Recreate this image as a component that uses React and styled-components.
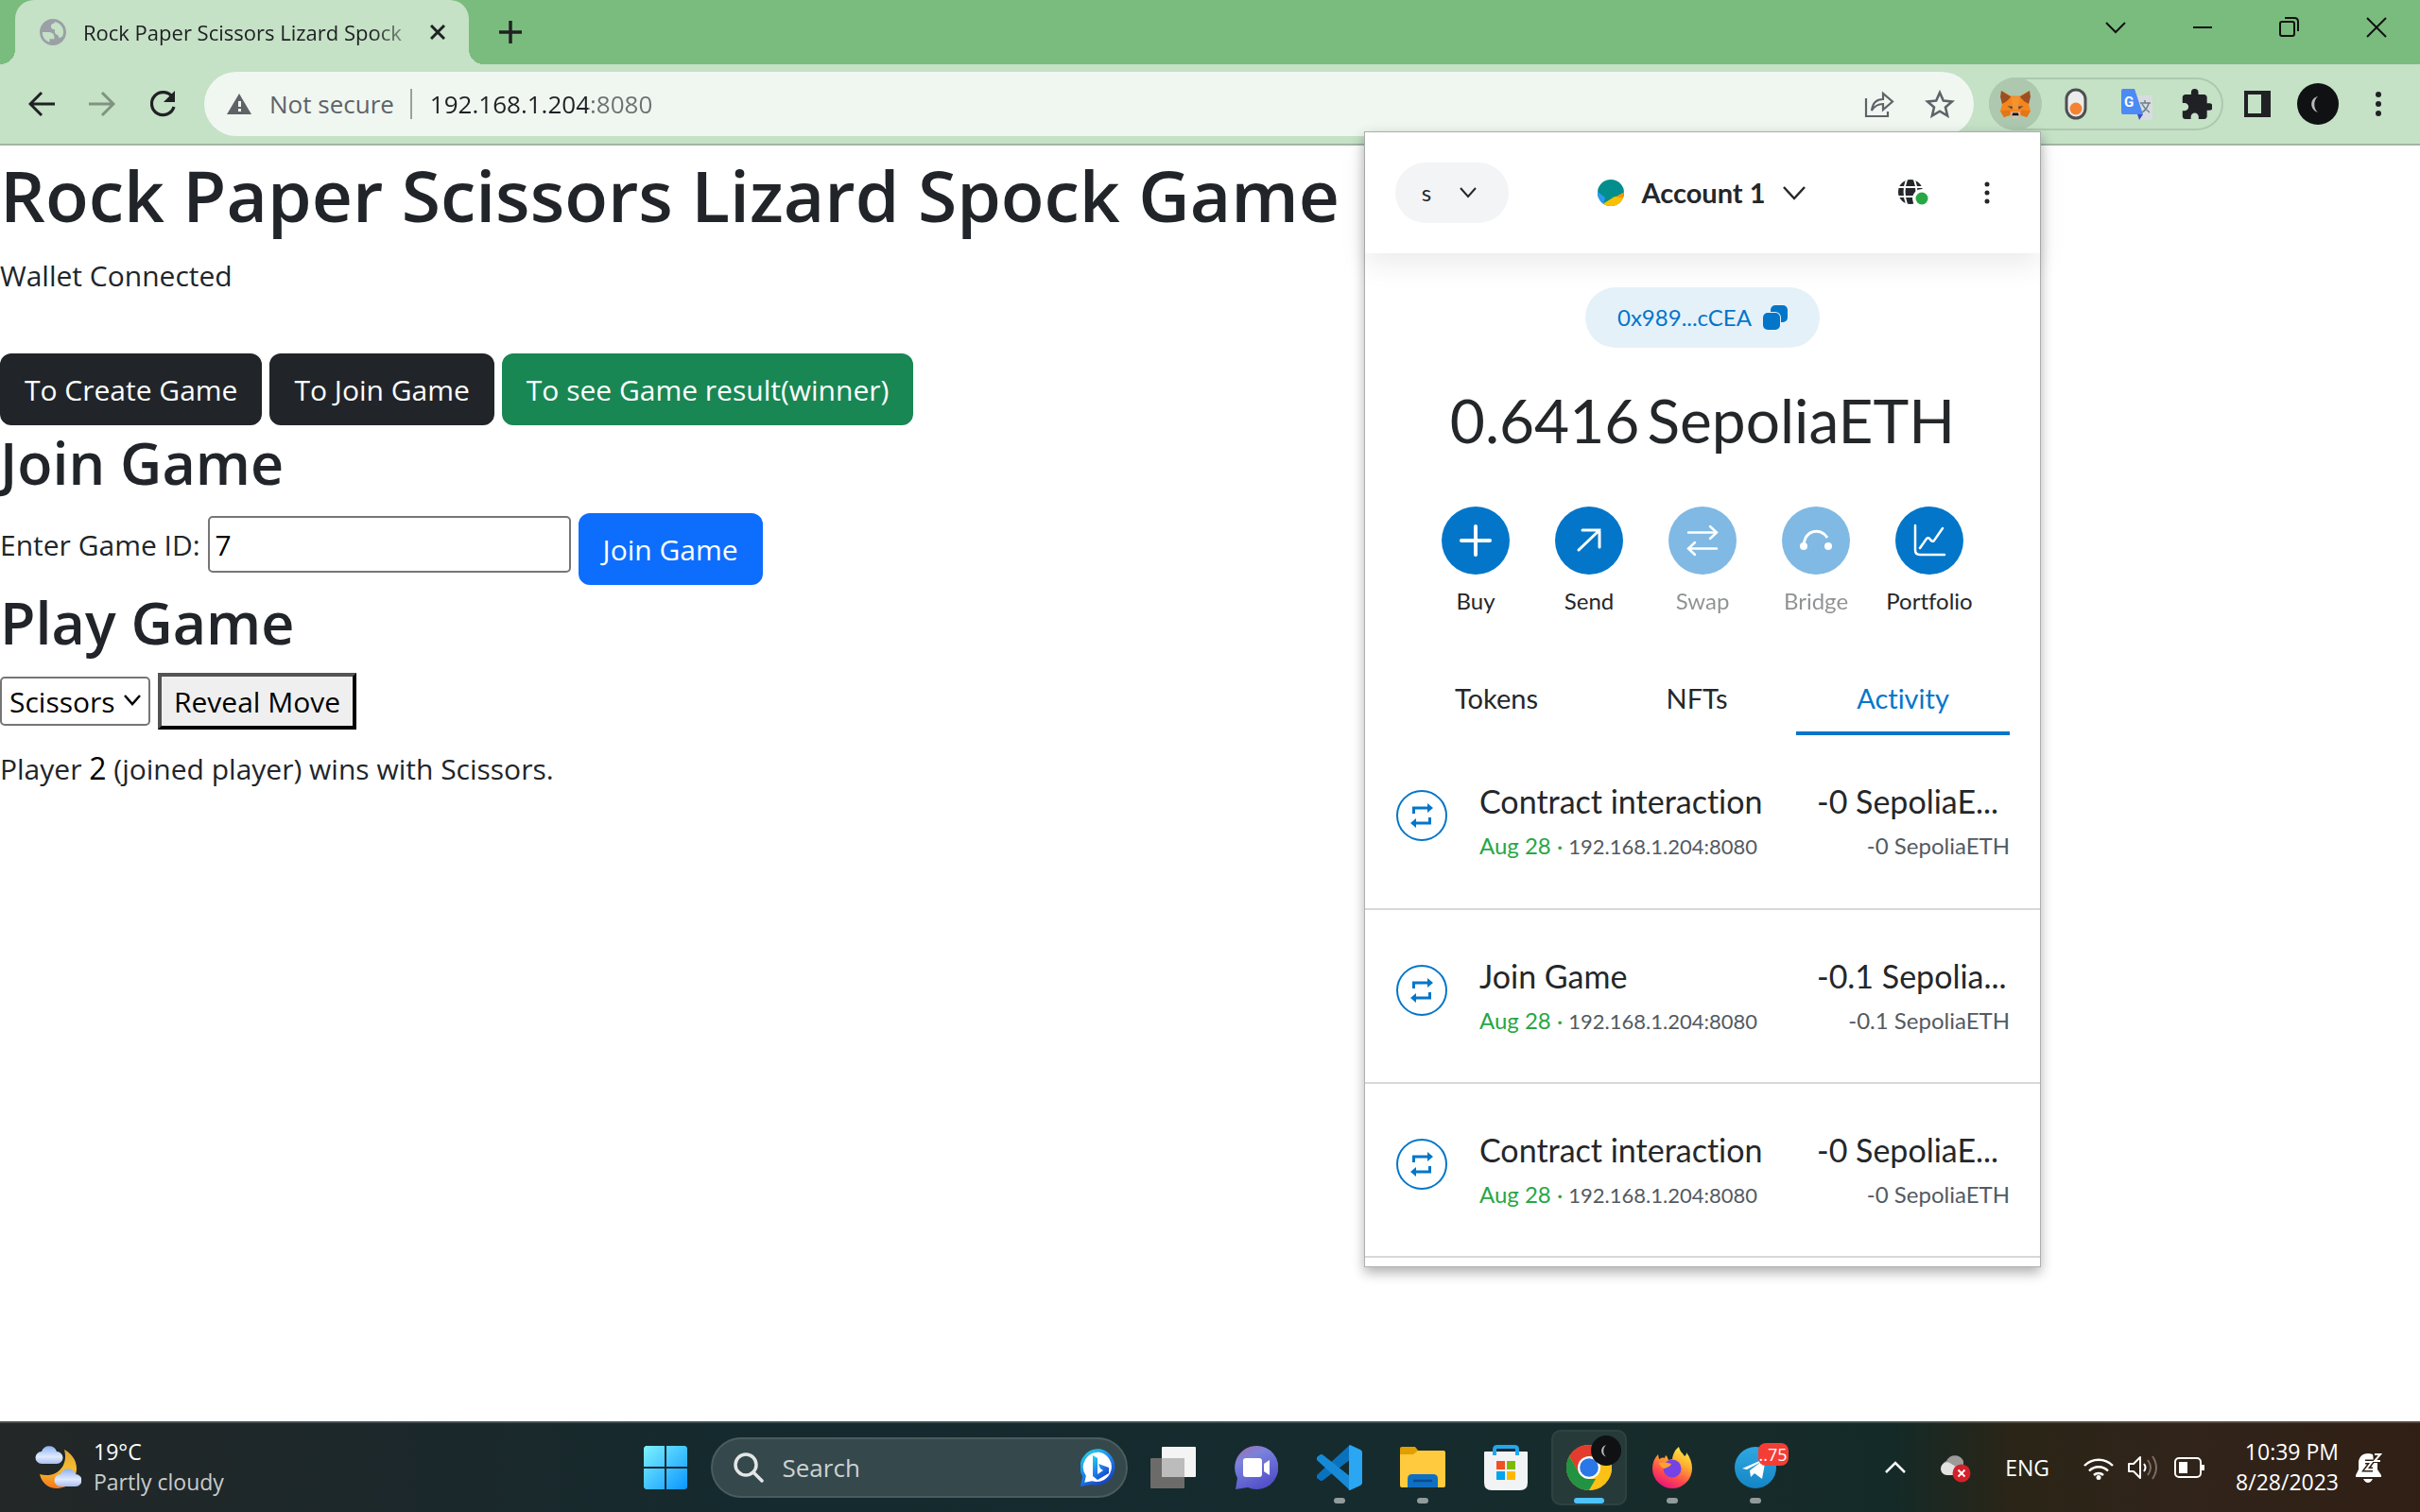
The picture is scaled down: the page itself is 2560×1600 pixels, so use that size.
import React from 'react';
import styled, { createGlobalStyle, css } from 'styled-components';

const ui = '"Open Sans", "Noto Sans", sans-serif';
const wallet = 'Lato, "Open Sans", sans-serif';

const GlobalStyle = createGlobalStyle`
  * { box-sizing: border-box; }
  html, body { margin: 0; padding: 0; }
  body { background: #fff; color: #212529; font-family: ${ui}; font-size: 30px; line-height: 48px; }
  h1, h2, p, ul { margin: 0; padding: 0; }
  button, input, select { font: inherit; color: inherit; margin: 0; }
  svg { display: block; flex: none; }
`;

const Screen = styled.div`
  position: relative;
  display: flex;
  flex-direction: column;
  min-height: 100vh;
`;

const PlainButton = styled.button`
  display: flex;
  align-items: center;
  justify-content: center;
  border: 0;
  padding: 0;
  background: none;
`;

/* ---------- browser frame ---------- */

const TabStrip = styled.header`
  display: flex;
  height: 68px;
  padding-left: 16px;
  background: #7abc7d;
`;

const Tab = styled.div`
  position: relative;
  display: flex;
  align-items: center;
  width: 480px;
  padding: 0 18px 0 26px;
  border-radius: 20px 20px 0 0;
  background: #c5e1c6;
  color: #202124;
  &::before, &::after {
    content: '';
    position: absolute;
    bottom: 0;
    width: 16px;
    height: 16px;
  }
  &::before { left: -16px; background: radial-gradient(circle at 0 0, transparent 16px, #c5e1c6 16px); }
  &::after { right: -16px; background: radial-gradient(circle at 100% 0, transparent 16px, #c5e1c6 16px); }
`;

const TabTitle = styled.span`
  flex: 1;
  margin-left: 18px;
  white-space: nowrap;
  font-size: 22px;
  line-height: 32px;
  mask-image: linear-gradient(to right, #000 85%, rgba(0, 0, 0, 0.3) 96%);
`;

const TabClose = styled(PlainButton)`
  width: 30px;
  height: 32px;
`;

const NewTab = styled(PlainButton)`
  width: 56px;
  margin-left: 16px;
`;

const WindowControls = styled.div`
  display: flex;
  height: 58px;
  margin-left: auto;
`;

const WindowButton = styled(PlainButton)`
  width: 92px;
`;

const Toolbar = styled.nav`
  display: flex;
  align-items: center;
  gap: 8px;
  height: 86px;
  padding: 0 16px;
  border-bottom: 2px solid #a2b5a3;
  background: #c5e1c6;
`;

const ToolButton = styled(PlainButton)`
  width: 56px;
  height: 56px;
  border-radius: 28px;
  background: ${p => (p.$active ? '#adc8ae' : 'none')};
`;

const Omnibox = styled.div`
  display: flex;
  align-items: center;
  flex: 1;
  height: 68px;
  margin: 0 8px;
  padding: 0 8px 0 24px;
  border-radius: 34px;
  background: #f0f7f1;
  font-size: 26px;
  line-height: 40px;
`;

const OmniActions = styled.div`
  display: flex;
  gap: 8px;
`;

const Security = styled.span`
  margin: 0 19px 0 19px;
  padding-right: 17px;
  border-right: 2px solid #9aa09b;
  color: #5f6368;
  line-height: 32px;
`;

const UrlInput = styled.input`
  flex: 1;
  border: 0;
  padding: 0;
  outline: 0;
  color: #202124;
  background: linear-gradient(to right, #202124 167px, #6d7271 167px);
  background-clip: text;
  -webkit-background-clip: text;
  -webkit-text-fill-color: transparent;
`;

const Extensions = styled.div`
  display: flex;
  gap: 8px;
  border-radius: 28px;
  box-shadow: inset 0 0 0 2px #adc8ae;
`;

/* ---------- game page ---------- */

const Page = styled.main`
  flex: 1;
  padding-top: 6px;
`;

const Title = styled.h1`
  margin-bottom: 16px;
  font-size: 75px;
  font-weight: 600;
  line-height: 92px;
`;

const Heading = styled.h2`
  margin-bottom: 13px;
  font-size: 61px;
  font-weight: 600;
  line-height: 80px;
`;

const Status = styled.p`
  margin-bottom: 58px;
`;

const Row = styled.div`
  display: flex;
  align-items: ${p => p.$align || 'center'};
  gap: 8px;
`;

const Field = styled.div`
  display: flex;
  align-items: center;
  gap: 8px;
  padding-top: 3px;
`;

const tones = { dark: '#212529', success: '#198754', primary: '#0d6efd' };

const Button = styled.button`
  padding: 13px 24px 11px;
  border: 2px solid ${p => tones[p.$tone]};
  border-radius: 12px;
  background: ${p => tones[p.$tone]};
  color: #fff;
`;

const FieldLabel = styled.label`
  padding-top: 2px;
`;

const GameInput = styled.input`
  width: 384px;
  height: 60px;
  padding: 2px 6px;
  border: 2px solid #767676;
  border-radius: 5px;
  background: #fff;
  color: #000;
`;

const SelectWrap = styled.div`
  position: relative;
  svg { position: absolute; right: 10px; top: 18px; pointer-events: none; }
`;

const MoveSelect = styled.select`
  appearance: none;
  height: 52px;
  padding: 2px 35px 0 8px;
  border: 2px solid #767676;
  border-radius: 5px;
  background: #fff;
  color: #000;
  line-height: 46px;
`;

const RevealButton = styled.button`
  height: 60px;
  padding: 3px 13px 1px;
  border: 4px outset #000;
  background: #efefef;
  color: #000;
`;

const Result = styled.p`
  margin-top: 17px;
  strong { font-size: 32px; font-weight: 500; color: #000; }
`;

/* ---------- wallet popup ---------- */

const Popup = styled.aside`
  position: absolute;
  top: 139px;
  right: 401px;
  width: 716px;
  border: 1px solid #adb0ad;
  background: #fff;
  box-shadow: 0 6px 12px rgba(0, 0, 0, 0.3);
  color: #24272a;
  font-family: ${wallet};
  font-variant-ligatures: none;
`;

const WalletHeader = styled.header`
  display: grid;
  grid-template-columns: 1fr auto 1fr;
  align-items: center;
  height: 128px;
  padding: 0 32px;
  box-shadow: 0 12px 28px rgba(0, 0, 0, 0.08);
`;

const NetworkButton = styled(PlainButton)`
  gap: 30px;
  justify-self: start;
  width: 120px;
  height: 64px;
  padding-right: 6px;
  border-radius: 32px;
  background: #f2f4f6;
  font-size: 24px;
`;

const AccountButton = styled(PlainButton)`
  gap: 18px;
  padding-right: 2px;
  font-size: 29px;
  font-weight: 700;
  line-height: 40px;
`;

const HeaderTools = styled.div`
  display: flex;
  align-items: center;
  justify-content: flex-end;
  gap: 38px;
`;

const HeaderButton = styled(PlainButton)`
  width: ${p => p.$w}px;
  height: 48px;
`;

const AddressButton = styled(PlainButton)`
  gap: 12px;
  height: 64px;
  margin: 36px auto 0;
  padding: 0 34px;
  border-radius: 32px;
  background: #e5f1f9;
  color: #0376c9;
  font-size: 24px;
`;

const Balance = styled.p`
  display: flex;
  justify-content: center;
  gap: 8px;
  margin-top: 37px;
  font-size: 64px;
  line-height: 80px;
`;

const Actions = styled.div`
  display: grid;
  grid-template-columns: repeat(5, 120px);
  justify-content: center;
  margin-top: 51px;
`;

const Action = styled(PlainButton)`
  flex-direction: column;
  gap: 12px;
  font-size: 24px;
  line-height: 32px;
  opacity: ${p => (p.disabled ? 0.5 : 1)};
`;

const ActionDisc = styled.span`
  display: flex;
  align-items: center;
  justify-content: center;
  width: 72px;
  height: 72px;
  border-radius: 50%;
  background: #0376c9;
`;

const Tabs = styled.div`
  display: grid;
  grid-template-columns: 107fr 105fr 113fr;
  margin-top: 52px;
  padding: 0 32px;
`;

const WalletTab = styled.button`
  padding: 15px 0;
  border: 0;
  border-bottom: 4px solid ${p => (p['aria-selected'] ? '#0376c9' : 'transparent')};
  background: none;
  color: ${p => (p['aria-selected'] ? '#0376c9' : '#24272a')};
  font-size: 29px;
  line-height: 40px;
`;

const ActivityList = styled.ul`
  padding-bottom: 9px;
  list-style: none;
`;

const ActivityItem = styled.li`
  display: flex;
  gap: 34px;
  padding: 48px 32px 49px 33px;
  border-bottom: 2px solid #d6d9dc;
  & + & { padding-bottom: 48px; }
`;

const ActivityIcon = styled.span`
  display: flex;
  align-items: center;
  justify-content: center;
  width: 54px;
  height: 54px;
  margin-top: 10px;
  border: 2px solid #0376c9;
  border-radius: 50%;
`;

const ActivityText = styled.div`
  flex: 1;
  display: flex;
  flex-direction: column;
  gap: 9px;
`;

const Amounts = styled(ActivityText)`
  flex: 0 0 204px;
`;

const ActivityTitle = styled.span`
  font-size: 34px;
  line-height: 44px;
  white-space: nowrap;
`;

const ActivitySub = styled.span`
  color: #535a61;
  font-size: 24px;
  line-height: 32px;
  white-space: nowrap;
  text-align: ${p => (p.$end ? 'right' : 'left')};
`;

const Confirmed = styled.span`
  color: #28a745;
`;

const Host = styled.span`
  font-size: 22px;
`;

/* ---------- taskbar ---------- */

const Taskbar = styled.footer`
  display: grid;
  grid-template-columns: 1fr auto 1fr;
  align-items: center;
  height: 96px;
  padding: 0 36px;
  border-top: 2px solid rgba(255, 255, 255, 0.18);
  background: linear-gradient(to right, #232727 0, #1b282b 18%, #152a2e 30%, #152b2e 55%, #172b2a 72%, #132a28 78%, #2a2517 83%, #31241a 90%, #301f15 100%);
  background-origin: border-box;
  color: #fff;
  font-size: 23px;
  line-height: 32px;
`;

const Weather = styled(PlainButton)`
  justify-self: start;
  gap: 13px;
  text-align: left;
`;

const Stack = styled.span`
  display: flex;
  flex-direction: column;
  padding-bottom: 3px;
  text-align: ${p => (p.$end ? 'right' : 'left')};
`;

const Muted = styled.span`
  color: #c9cccc;
`;

const Apps = styled.div`
  display: flex;
  align-items: center;
  gap: 8px;
`;

const SearchBox = styled.label`
  display: flex;
  align-items: center;
  gap: 20px;
  width: 441px;
  height: 64px;
  padding: 0 8px 0 22px;
  border: 2px solid #4a5c5e;
  border-radius: 32px;
  background: #35484b;
`;

const SearchInput = styled.input`
  flex: 1;
  min-width: 0;
  border: 0;
  padding: 0;
  outline: 0;
  background: none;
  color: #fff;
  font-size: 26px;
  &::placeholder { color: #cdd2d2; opacity: 1; }
`;

const AppButton = styled(PlainButton)`
  position: relative;
  width: 80px;
  height: 80px;
  border-radius: 10px;
  ${p => p.$state === 'active' && css`
    background: #273a3a;
    box-shadow: inset 0 0 0 2px #2f4242;
  `}
  ${p => p.$state && css`
    &::after {
      content: '';
      position: absolute;
      bottom: 2px;
      left: 50%;
      width: ${p.$state === 'active' ? 32 : 12}px;
      height: 6px;
      margin-left: ${p.$state === 'active' ? -16 : -6}px;
      border-radius: 3px;
      background: ${p.$state === 'active' ? '#4cc2ff' : '#929b9b'};
    }
  `}
`;

const CountBadge = styled.span`
  position: absolute;
  top: 14px;
  right: 5px;
  width: 32px;
  border-radius: 8px;
  background: #f53d35;
  font-size: 18px;
  line-height: 24px;
  text-align: center;
`;

const Tray = styled.div`
  display: flex;
  align-items: center;
  justify-self: end;
  gap: 36px;
  padding-right: 4px;
`;

const TrayGroup = styled(PlainButton)`
  gap: ${p => p.$gap}px;
`;

const TrayEnd = styled.div`
  display: flex;
  align-items: center;
  gap: 32px;
`;

/* ---------- icons ---------- */

const Line = ({ w, h, vb, sw = 2, color = 'currentColor', d, children }) => (
  <svg width={w} height={h || w} viewBox={vb || `0 0 ${w} ${h || w}`} fill="none" stroke={color} strokeWidth={sw} aria-hidden="true">
    {d && <path d={d} />}
    {children}
  </svg>
);

const Dots = ({ r, gap, color }) => (
  <svg width="12" height="36" viewBox="-6 -18 12 36" fill={color} aria-hidden="true">
    <circle cy={-gap} r={r} /><circle r={r} /><circle cy={gap} r={r} />
  </svg>
);

const TabGlobe = () => (
  <svg width="28" height="28" viewBox="2 2 20 20" fill="#9aa0a6" aria-hidden="true">
    <path d="M12 2C6.48 2 2 6.48 2 12s4.480 10 10 10 10-4.480 10-10S17.520 2 12 2zM4 12h4.400c3.400.020 4.930 1.730 4.580 5.130H9.500v2.470A8.010 8.010 0 0 1 4 12zm12.700 4.500c-.4-1.700-1.100-2.400-2.700-3-.7-1.200-.9-2-.5-3.500-1.900 0-3-.5-3-2.200 0-1.500 1-2.500 2.800-2.500V4.100a8 8 0 0 1 5.900 11.200c-.8.6-1.600 1-2.500 1.200z" />
  </svg>
);

const Fox = () => (
  <svg width="32" height="30" viewBox="0 0 34 32" aria-hidden="true">
    <path d="M1 1l11 6h10l11-6-1 15 2 8-4 7-7-2-3 3h-6l-3-3-7 2-4-7 2-8z" fill="#f6851b" />
    <path d="M1 1l11 7-5 5-5 3-2-8zM33 1L22 8l5 5 5 3 2-8z" fill="#9c4f22" />
    <path d="M0 24l10-1 2 5-8 3zM34 24l-10-1-2 5 8 3z" fill="#e2761b" />
    <path d="M12 8h10l-2 14h-6z" fill="#f59331" />
    <path d="M8 18l6 1-1 3zM26 18l-6 1 1 3z" fill="#4a4c50" />
    <path d="M12 25h10l1 4-3 3h-6l-3-3z" fill="#d5bfb2" />
    <path d="M14 26h6l1 3h-8z" fill="#161616" />
  </svg>
);

const TogglePill = () => (
  <svg width="24" height="34" viewBox="0 0 24 34" aria-hidden="true">
    <rect x="2" y="2" width="20" height="30" rx="10" fill="#ececec" stroke="#4d5052" strokeWidth="3" />
    <circle cx="12" cy="22" r="6.500" fill="#f58233" />
  </svg>
);

const Translate = () => (
  <svg width="33" height="33" viewBox="0 0 33 33" aria-hidden="true">
    <path d="M12 7h19a2 2 0 0 1 2 2v22a2 2 0 0 1-2 2H18z" fill="#d9dcdf" />
    <path d="M17 27h6l-4 6z" fill="#3a4fc0" />
    <path d="M2 0h12l9 27H2a2 2 0 0 1-2-2V2a2 2 0 0 1 2-2z" fill="#4c8bf5" />
    <text x="3" y="19" fill="#fff" fontFamily="Roboto, sans-serif" fontSize="15" fontWeight="700">G</text>
    <path d="M20 15h11M25 12v3M29 15c-1 5-4 8-7 10M22 16c2 4 5 7 8 9" stroke="#6b7f8e" strokeWidth="1.500" fill="none" />
  </svg>
);

const Puzzle = () => (
  <svg width="32" height="32" viewBox="1.500 1 21 21" fill="#202124" aria-hidden="true">
    <path d="M20.500 11H19V7c0-1.100-.9-2-2-2h-4V3.500a2.500 2.500 0 0 0-5 0V5H4c-1.100 0-1.990.9-1.990 2v3.800H3.500c1.490 0 2.700 1.210 2.700 2.700s-1.210 2.700-2.700 2.700H2V20c0 1.100.9 2 2 2h3.800v-1.500c0-1.490 1.210-2.700 2.700-2.700s2.700 1.210 2.700 2.700V22H17c1.100 0 2-.9 2-2v-4h1.500a2.500 2.500 0 0 0 0-5z" />
  </svg>
);

const Moon = ({ size }) => (
  <svg width={size} height={size} viewBox="0 0 44 44" aria-hidden="true">
    <circle cx="22" cy="22" r="22" fill="#0f1113" />
    <path d="M22 14c-9 2-9 14 0 17-5-4-5-13 0-17z" fill="#b9b9b9" />
  </svg>
);

const Jazz = () => (
  <svg width="28" height="28" viewBox="0 0 28 28" aria-hidden="true">
    <clipPath id="jazz"><circle cx="14" cy="14" r="14" /></clipPath>
    <g clipPath="url(#jazz)">
      <path d="M0 0h28v28H0z" fill="#018e8c" />
      <path d="M-1 12l9 7-2 9h-7z" fill="#2a9af3" />
      <path d="M30 12L7 25l-1 4h24z" fill="#f29602" />
      <path d="M30 20L18 18 7 25l-1 4h24z" fill="#fac000" />
    </g>
  </svg>
);

const Connected = () => (
  <svg width="32" height="28" viewBox="0 0 32 28" aria-hidden="true">
    <circle cx="13" cy="13" r="13" fill="#24272a" />
    <path d="M0 8h26M0 18h26M9 0c-3 8-3 18 0 26M17 0c3 8 3 18 0 26" stroke="#fff" strokeWidth="2" fill="none" />
    <circle cx="25" cy="20" r="10" fill="#fff" />
    <circle cx="25" cy="20" r="6.500" fill="#28a745" />
  </svg>
);

const Copy = () => (
  <svg width="26" height="26" viewBox="0 0 26 26" fill="#0376c9" aria-hidden="true">
    <rect x="8" y="0" width="18" height="18" rx="5" />
    <rect x="-1" y="7" width="20" height="20" rx="6" fill="#e5f1f9" />
    <rect x="0" y="8" width="18" height="18" rx="5" />
  </svg>
);

const Repeat = () => (
  <svg width="28" height="28" viewBox="0 0 28 28" fill="#0376c9" aria-hidden="true">
    <path d="M4 12V4.500h16V1l6 5-6 5V7.500H7V12zM24 16v7.500H8V27l-6-5 6-5v3.500h13V16z" />
  </svg>
);

const Cloud = ({ x, y }) => (
  <g transform={`translate(${x} ${y})`}>
    <path d="M6 21a6.500 6.500 0 0 1 0-13 8.500 8.500 0 0 1 16 0 6.500 6.500 0 0 1 0 13z" fill="url(#cloud)" />
  </g>
);

const WeatherIcon = () => (
  <svg width="50" height="48" viewBox="0 0 50 48" aria-hidden="true">
    <defs>
      <linearGradient id="cloud" x1="0" y1="0" x2="0" y2="1"><stop stopColor="#8fb1ef" /><stop offset=".6" stopColor="#dfeafe" /><stop offset="1" stopColor="#a9bdf0" /></linearGradient>
      <linearGradient id="moon" x1="0" y1="0" x2="0" y2="1"><stop stopColor="#e0a53c" /><stop offset=".5" stopColor="#f7bd2c" /><stop offset="1" stopColor="#f3761b" /></linearGradient>
    </defs>
    <path d="M32 5c6 3 13 10 13 20 0 12-9 21-21 21C15 46 8 40 6 31c17 5 31-8 26-26z" fill="url(#moon)" />
    <Cloud x={2} y={-1} />
    <Cloud x={22} y={23} />
  </svg>
);

const WindowsLogo = () => (
  <svg width="46" height="46" viewBox="0 0 46 46" aria-hidden="true">
    <linearGradient id="win" gradientUnits="userSpaceOnUse" x1="0" y1="0" x2="46" y2="46"><stop stopColor="#7df3ff" /><stop offset="1" stopColor="#0a95ff" /></linearGradient>
    <path d="M2 0h20v22H0V2zM24 0h20l2 2v20H24zM0 24h22v22H2l-2-2zM24 24h22v20l-2 2H24z" fill="url(#win)" />
  </svg>
);

const Bing = () => (
  <svg width="40" height="40" viewBox="0 0 40 40" aria-hidden="true">
    <linearGradient id="bing" x1="0" y1="0" x2=".6" y2="1"><stop stopColor="#22d8ea" /><stop offset=".5" stopColor="#1f8cf0" /><stop offset="1" stopColor="#1747c9" /></linearGradient>
    <path d="M20 2a17.500 17.500 0 1 1-8 34l-10 2 2-9A17.500 17.500 0 0 1 20 2z" fill="#fff" stroke="url(#bing)" strokeWidth="3.500" />
    <path d="M13 7l5 3v17l6-4-3-2-2-5 11 4v6L18 33l-5-4z" fill="url(#bing)" />
  </svg>
);

const TaskView = () => (
  <svg width="48" height="44" viewBox="0 0 48 44" aria-hidden="true">
    <rect x="12" y="0" width="36" height="32" rx="1" fill="#f4f4f4" />
    <rect x="0" y="12" width="36" height="32" rx="1" fill="#6c6b6a" />
    <path d="M12 12h24v20H12z" fill="#bcbcbc" />
  </svg>
);

const Chat = () => (
  <svg width="46" height="46" viewBox="0 0 46 46" aria-hidden="true">
    <linearGradient id="chat" x1="0" y1="0" x2=".5" y2="1"><stop stopColor="#a96aa6" /><stop offset=".35" stopColor="#7a83dc" /><stop offset="1" stopColor="#5451cb" /></linearGradient>
    <path d="M23 0a23 23 0 1 1-9 44L1 46l2-12A23 23 0 0 1 23 0z" fill="url(#chat)" />
    <rect x="9" y="13" width="20" height="20" rx="3" fill="#fff" />
    <path d="M31 19l6-4v16l-6-4z" fill="#fff" />
  </svg>
);

const VsCode = () => (
  <svg width="48" height="48" viewBox="0 0 48 48" aria-hidden="true">
    <path d="M35 0L0 32v3l4 3c1 0 2 0 3-1l29-22z" fill="#0a72bd" />
    <path d="M0 13l4-3c1 0 2 0 3 1l29 23-1 14L0 16z" fill="#168ad6" />
    <path d="M35 0l11 5q2 1 2 3v32q0 2-2 3l-11 5q-2 0-1-2V2q0-2 1-2z" fill="#2aa6f2" />
  </svg>
);

const Explorer = () => (
  <svg width="48" height="44" viewBox="0 0 48 44" aria-hidden="true">
    <path d="M0 2q0-2 2-2h14l4 5v10H0z" fill="#dfa000" />
    <path d="M0 8h14l5-4h27q2 0 2 2v35q0 2-2 2H2q-2 0-2-2z" fill="#ffca3e" />
    <path d="M8 43V34q0-5 5-5h22q5 0 5 5v9z" fill="#0f6fc0" />
    <path d="M14 36h20" stroke="#0a4b91" strokeWidth="2.500" />
  </svg>
);

const Store = () => (
  <svg width="46" height="48" viewBox="0 0 46 48" aria-hidden="true">
    <path d="M0 8q0-1 1-1h44q1 0 1 1v32q0 8-8 8H8q-8 0-8-8z" fill="#f2f3f4" />
    <path d="M11 11V5q0-3 3-3h18q3 0 3 3v6" stroke="#22a7ee" strokeWidth="4" fill="none" />
    <path d="M13 17h9v9h-9z" fill="#f25022" /><path d="M24 17h9v9h-9z" fill="#7fba00" />
    <path d="M13 28h9v9h-9z" fill="#00a4ef" /><path d="M24 28h9v9h-9z" fill="#ffb900" />
  </svg>
);

const Chrome = () => (
  <svg width="48" height="48" viewBox="0 0 48 48" aria-hidden="true">
    <circle cx="24" cy="24" r="24" fill="#fbc116" />
    <path d="M24 0A24 24 0 0 1 44.800 12H24l-10.400 18L3.200 12A24 24 0 0 1 24 0z" fill="#e33b2e" />
    <path d="M3.200 12l10.400 18L24 36h10.400L24 48A24 24 0 0 1 3.200 12z" fill="#229342" />
    <path d="M34.400 30L24 48a24 24 0 0 0 20.800-36H24z" fill="#fbc116" />
    <circle cx="24" cy="24" r="12" fill="#fff" /><circle cx="24" cy="24" r="9.800" fill="#2a77e8" />
  </svg>
);

const ProfileBadge = styled.span`
  position: absolute;
  top: 6px;
  right: 6px;
`;

const Firefox = () => (
  <svg width="44" height="44" viewBox="0 0 44 44" aria-hidden="true">
    <linearGradient id="ff" x1=".8" y1="0" x2=".3" y2="1"><stop stopColor="#fff04d" /><stop offset=".35" stopColor="#ffb02e" /><stop offset=".7" stopColor="#ff4a4d" /><stop offset="1" stopColor="#e3127f" /></linearGradient>
    <path d="M29 0c1 5 4 7 6 10 2-1 2-3 2-4 4 5 6 11 6 17a21 21 0 0 1-42 0C1 17 3 12 7 8l1 5c2-1 4-2 6-1l1-3c2 1 2 3 3 5l4-1c1-6 3-10 7-13z" fill="url(#ff)" />
    <circle cx="22" cy="23" r="9.500" fill="#7542e5" />
    <path d="M8 17c6-2 9 0 13 1-1 3-5 4-7 5-3 0-5-3-6-6z" fill="#ffa02e" />
  </svg>
);

const Telegram = () => (
  <svg width="44" height="44" viewBox="0 0 44 44" aria-hidden="true">
    <linearGradient id="tg" x1="0" y1="0" x2="0" y2="1"><stop stopColor="#2fa8e2" /><stop offset="1" stopColor="#1485c4" /></linearGradient>
    <circle cx="22" cy="22" r="22" fill="url(#tg)" />
    <path d="M8 23l25-11-4 22-8-6-4 4-1-7 12-9-15 8z" fill="#fff" />
  </svg>
);

const CloudOff = () => (
  <svg width="33" height="33" viewBox="0 0 33 33" aria-hidden="true">
    <path d="M8 24a8 8 0 0 1-1-15 10 10 0 0 1 18 0v15z" fill="#9b9c9a" />
    <path d="M5 11q4-2 7 1l10 6v6H8C1 24-2 15 5 11z" fill="#e2e2e1" />
    <circle cx="23" cy="22" r="9.500" fill="#d6202a" />
    <path d="M19.500 18.500l7 7M26.500 18.500l-7 7" stroke="#fff" strokeWidth="2" />
  </svg>
);

const Wifi = () => (
  <Line w={32} h={25} sw={2.500}>
    <path d="M1 10a21 21 0 0 1 30 0M6 15.500a14 14 0 0 1 20 0M11 20a7.500 7.500 0 0 1 10 0" />
    <circle cx="16" cy="22.500" r="2.500" fill="currentColor" stroke="none" />
  </Line>
);

const Volume = () => (
  <Line w={34} h={28} sw={2}>
    <path d="M1 10h5l7-7v22l-7-7H1z" strokeLinejoin="round" />
    <path d="M17 10q3 4 0 8" />
    <path d="M21 6q6 8 0 16M26 2q8 12 0 24" stroke="#7b6d64" />
  </Line>
);

const Battery = () => (
  <Line w={33} h={22} sw={2}>
    <rect x="1" y="1" width="27" height="20" rx="4" />
    <path d="M5 5h9v12H5zM29 8h3v6h-3z" fill="currentColor" stroke="none" />
  </Line>
);

const Bell = () => (
  <svg width="28" height="32" viewBox="0 0 28 32" aria-hidden="true">
    <path d="M13 1c6 0 10 4 10 10v7l4 6v2H0v-2l3-6v-7C3 5 7 1 13 1zM8 28h10q-2 4-5 4t-5-4z" fill="#fff" />
    <path d="M18 0h10v11h-9z" fill="#301f15" />
    <path d="M10 10h7l-6 8h7" stroke="#301f15" strokeWidth="5" fill="none" />
    <path d="M10 10h7l-6 8h7M20 2h6l-6 7h6" stroke="#fff" strokeWidth="2" fill="none" />
  </svg>
);

/* ---------- data ---------- */

const actions = [
  { name: 'Buy', icon: <Line w={36} sw={4} color="#fff"><path d="M18 3v30M3 18h30" strokeLinecap="round" /></Line> },
  { name: 'Send', icon: <Line w={36} sw={3} color="#fff"><path d="M7 28L29 7M11 7h18v18" strokeLinecap="round" /></Line> },
  { name: 'Swap', disabled: true, icon: <Line w={36} sw={2.500} color="#fff"><path d="M3 9.500h30M26 3l7 6.500-7 6.500M33 26.500H3M10 20l-7 6.500 7 6.500" strokeLinecap="round" /></Line> },
  { name: 'Bridge', disabled: true, icon: <Line w={36} sw={3} color="#fff"><path d="M5 24c1-18 18-20 25-9" /><circle cx="5" cy="24" r="4" fill="#fff" stroke="none" /><circle cx="31" cy="24" r="4" fill="#fff" stroke="none" /></Line> },
  { name: 'Portfolio', icon: <Line w={36} sw={2.500} color="#fff"><path d="M3 2v26q0 5 5 5h26M8 26l7-10q2-2 4 1t4 1l9-13" strokeLinecap="round" /></Line> },
];

const activity = [
  { title: 'Contract interaction', short: '-0 SepoliaE...', full: '-0 SepoliaETH' },
  { title: 'Join Game', short: '-0.1 Sepolia...', full: '-0.1 SepoliaETH' },
  { title: 'Contract interaction', short: '-0 SepoliaE...', full: '-0 SepoliaETH' },
];

const apps = [
  { name: 'Task view', icon: <TaskView /> },
  { name: 'Chat', icon: <Chat /> },
  { name: 'Visual Studio Code', icon: <VsCode />, state: 'open' },
  { name: 'File Explorer', icon: <Explorer />, state: 'open' },
  { name: 'Microsoft Store', icon: <Store /> },
  { name: 'Google Chrome', icon: <Chrome />, state: 'active', extra: <ProfileBadge><Moon size={32} /></ProfileBadge> },
  { name: 'Firefox', icon: <Firefox />, state: 'open' },
  { name: 'Telegram', icon: <Telegram />, state: 'open', extra: <CountBadge>..75</CountBadge> },
];

const BrowserFrame = () => (
  <>
    <TabStrip>
      <Tab>
        <TabGlobe />
        <TabTitle>Rock Paper Scissors Lizard Spock</TabTitle>
        <TabClose aria-label="Close tab"><Line w={16} sw={3} d="M1 1l14 14M15 1L1 15" color="#202124" /></TabClose>
      </Tab>
      <NewTab aria-label="New tab"><Line w={24} sw={3.500} d="M12 0v24M0 12h24" color="#202124" /></NewTab>
      <WindowControls>
        <WindowButton aria-label="Search tabs"><Line w={22} h={14} d="M1 2l10 10L21 2" color="#111" /></WindowButton>
        <WindowButton aria-label="Minimize"><Line w={20} h={4} d="M0 2h20" color="#111" /></WindowButton>
        <WindowButton aria-label="Restore">
          <Line w={22} h={22} color="#111"><rect x="1" y="5" width="15" height="15" rx="2" /><path d="M6 1h10q4 0 4 4v10" /></Line>
        </WindowButton>
        <WindowButton aria-label="Close"><Line w={22} d="M1 1l20 20M21 1L1 21" color="#111" /></WindowButton>
      </WindowControls>
    </TabStrip>
    <Toolbar>
      <ToolButton aria-label="Back"><Line w={28} sw={3} d="M28 14H3M14 2L2 14l12 12" color="#202124" /></ToolButton>
      <ToolButton aria-label="Forward"><Line w={28} sw={3} d="M0 14h25M14 2l12 12-12 12" color="#809380" /></ToolButton>
      <ToolButton aria-label="Reload">
        <Line w={30} sw={3.200} color="#202124"><path d="M25.500 8A12 12 0 1 0 27 18" /><path d="M28 1v12H16z" fill="#202124" stroke="none" /></Line>
      </ToolButton>
      <Omnibox>
        <svg width="26" height="22" viewBox="0 0 26 22" aria-hidden="true"><path d="M13 0l13 22H0z" fill="#5f6368" /><path d="M12 8h3v6h-3zM12 16h3v3h-3z" fill="#f0f7f1" /></svg>
        <Security>Not secure</Security>
        <UrlInput aria-label="Address" defaultValue="192.168.1.204:8080" />
        <OmniActions>
          <ToolButton aria-label="Share"><Line w={32} h={28} sw={2.200} color="#5f6368" d="M2 8v19h23v-5M8 21c1-9 6-12 12-12V3l10 8.500L20 20v-6c-6 0-9 2-12 7z" /></ToolButton>
          <ToolButton aria-label="Bookmark"><Line w={32} h={30} sw={2.600} color="#5f6368" d="M16 3l3.800 8.500 9.200.9-7 6.100 2.100 9L16 22.700l-8.100 4.800 2.100-9-7-6.100 9.200-.9z" /></ToolButton>
        </OmniActions>
      </Omnibox>
      <Extensions>
        <ToolButton $active aria-label="MetaMask"><Fox /></ToolButton>
        <ToolButton aria-label="Toggle"><TogglePill /></ToolButton>
        <ToolButton aria-label="Translate"><Translate /></ToolButton>
        <ToolButton aria-label="Extensions"><Puzzle /></ToolButton>
      </Extensions>
      <ToolButton aria-label="Side panel"><svg width="28" height="28" viewBox="0 0 28 28" aria-hidden="true"><path d="M0 0h28v28H0zM4 4v20h14V4z" fill="#202124" fillRule="evenodd" /></svg></ToolButton>
      <ToolButton aria-label="Profile"><Moon size={44} /></ToolButton>
      <ToolButton aria-label="Menu"><Dots r={3} gap={10} color="#202124" /></ToolButton>
    </Toolbar>
  </>
);

const GamePage = () => (
  <Page>
    <Title>Rock Paper Scissors Lizard Spock Game</Title>
    <Status>Wallet Connected</Status>
    <Row>
      <Button $tone="dark">To Create Game</Button>
      <Button $tone="dark">To Join Game</Button>
      <Button $tone="success">To see Game result(winner)</Button>
    </Row>
    <Heading>Join Game</Heading>
    <Row $align="flex-start">
      <Field>
        <FieldLabel htmlFor="game-id">Enter Game ID:</FieldLabel>
        <GameInput id="game-id" defaultValue="7" />
      </Field>
      <Button $tone="primary">Join Game</Button>
    </Row>
    <Heading>Play Game</Heading>
    <Row>
      <SelectWrap>
        <MoveSelect aria-label="Move" defaultValue="Scissors"><option>Scissors</option></MoveSelect>
        <Line w={18} h={14} sw={2.500} color="#000" d="M1 2l8 9 8-9" />
      </SelectWrap>
      <RevealButton>Reveal Move</RevealButton>
    </Row>
    <Result>Player <strong>2</strong> (joined player) wins with Scissors.</Result>
  </Page>
);

const WalletPopup = () => (
  <Popup>
    <WalletHeader>
      <NetworkButton aria-label="Network">s<Line w={18} h={12} sw={2} d="M1 1l8 9 8-9" /></NetworkButton>
      <AccountButton><Jazz />Account 1<Line w={24} h={16} sw={2.500} d="M1 2l11 12L23 2" /></AccountButton>
      <HeaderTools>
        <HeaderButton $w={32} aria-label="Connected sites"><Connected /></HeaderButton>
        <HeaderButton $w={48} aria-label="Options"><Dots r={2.500} gap={9} color="#24272a" /></HeaderButton>
      </HeaderTools>
    </WalletHeader>
    <AddressButton>0x989...cCEA<Copy /></AddressButton>
    <Balance><span>0.6416</span><span>SepoliaETH</span></Balance>
    <Actions>
      {actions.map(a => (
        <Action key={a.name} disabled={a.disabled}><ActionDisc>{a.icon}</ActionDisc>{a.name}</Action>
      ))}
    </Actions>
    <Tabs role="tablist">
      {['Tokens', 'NFTs', 'Activity'].map(t => (
        <WalletTab key={t} role="tab" aria-selected={t === 'Activity'}>{t}</WalletTab>
      ))}
    </Tabs>
    <ActivityList>
      {activity.map((a, i) => (
        <ActivityItem key={i}>
          <ActivityIcon><Repeat /></ActivityIcon>
          <ActivityText>
            <ActivityTitle>{a.title}</ActivityTitle>
            <ActivitySub><Confirmed>Aug 28 ·</Confirmed> <Host>192.168.1.204:8080</Host></ActivitySub>
          </ActivityText>
          <Amounts>
            <ActivityTitle>{a.short}</ActivityTitle>
            <ActivitySub $end>{a.full}</ActivitySub>
          </Amounts>
        </ActivityItem>
      ))}
    </ActivityList>
  </Popup>
);

const Dock = () => (
  <Taskbar>
    <Weather><WeatherIcon /><Stack>19°C<Muted>Partly cloudy</Muted></Stack></Weather>
    <Apps>
      <AppButton aria-label="Start"><WindowsLogo /></AppButton>
      <SearchBox>
        <Line w={32} h={32} sw={3.500} color="#e3e6e6"><circle cx="13" cy="13" r="11" /><path d="M21 21l9 9" strokeLinecap="round" /></Line>
        <SearchInput type="text" placeholder="Search" aria-label="Search" />
        <Bing />
      </SearchBox>
      {apps.map(a => (
        <AppButton key={a.name} aria-label={a.name} $state={a.state}>{a.icon}{a.extra}</AppButton>
      ))}
    </Apps>
    <Tray>
      <PlainButton aria-label="Hidden icons"><Line w={22} h={14} sw={2.500} d="M1 12L11 2l10 10" /></PlainButton>
      <PlainButton aria-label="OneDrive"><CloudOff /></PlainButton>
      <PlainButton>ENG</PlainButton>
      <TrayEnd>
        <TrayGroup $gap={15} aria-label="Network, sound and battery"><Wifi /><Volume /><Battery /></TrayGroup>
        <TrayGroup $gap={18}><Stack $end>10:39 PM<span>8/28/2023</span></Stack><Bell /></TrayGroup>
      </TrayEnd>
    </Tray>
  </Taskbar>
);

export default function App() {
  return (
    <Screen>
      <GlobalStyle />
      <BrowserFrame />
      <GamePage />
      <Dock />
      <WalletPopup />
    </Screen>
  );
}
